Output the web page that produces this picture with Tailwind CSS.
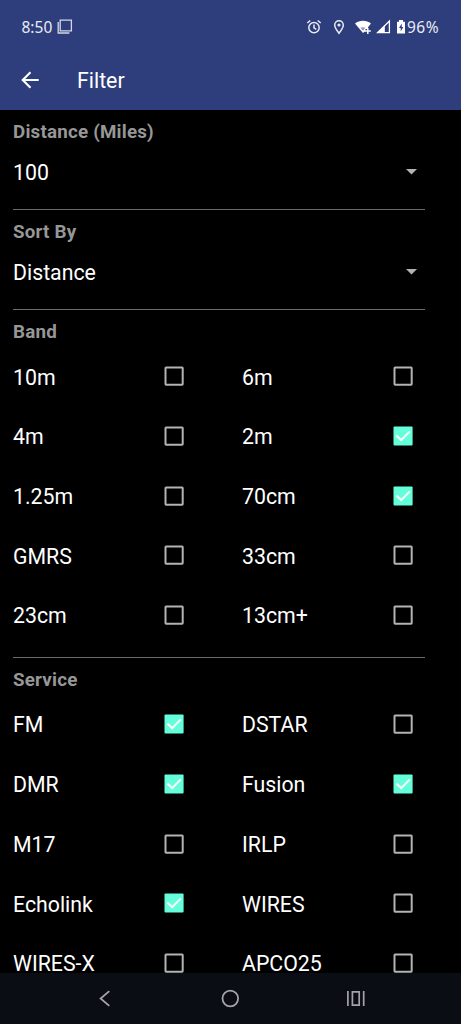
<!DOCTYPE html>
<html lang="en">
<head>
<meta charset="utf-8">
<title>Filter</title>
<script src="https://cdn.jsdelivr.net/npm/@tailwindcss/browser@4"></script>
</head>
<body class="bg-black">
<svg class="hidden">
  <symbol id="off" viewBox="0 0 20 20"><rect x="1.500" y="1.500" width="17.200" height="17.200" rx=".6" fill="none" stroke="#b3b3b3" stroke-width="2"/></symbol>
  <symbol id="on" viewBox="0 0 20 20"><rect x=".5" y=".5" width="19.100" height="19.100" rx="1" fill="#64ffda"/><path d="M3.300 9.500l4.900 4.600 8.600-8.700" fill="none" stroke="#fff" stroke-width="2"/></symbol>
</svg>
<div class="flex h-[1024px] w-[461px] flex-col overflow-hidden bg-black font-['Roboto',sans-serif] text-[21.3px] text-white">
  <header class="flex h-[109.5px] shrink-0 flex-col bg-[#2e3d7c]">
    <div class="flex h-[53px] items-center pt-[2px] pr-[20.5px] pl-[21.5px] font-['Noto_Sans',sans-serif] text-[#e9ebf2]">
      <span class="w-[35.5px] pt-px whitespace-nowrap text-[15.5px]">8:50</span>
      <svg class="mb-px h-4 w-4" viewBox="0 0 16 16" fill="none" stroke="#d5d8e5" stroke-width="1.300"><path d="M3.200 1.100h11.200v10.800H3.200zM1.200 3v11H12.400"/></svg>
      <span class="flex-1"></span>
      <svg class="mb-px h-4 w-4" viewBox="0 0 16 16" fill="none" stroke="#e9ebf2" stroke-width="1.500"><circle cx="8" cy="8.600" r="5.200"/><path d="M8 5.500v3.400l2.300 1.400M1.300 4l3-2.500M14.700 4l-3-2.500"/></svg>
      <svg class="mb-px ml-[9px] h-4 w-4" viewBox="0 0 16 16" fill="none" stroke="#e9ebf2" stroke-width="1.500"><path d="M8 14.300C5.500 11 3.700 8.300 3.700 6a4.300 4.300 0 018.600 0C12.300 8.300 10.500 11 8 14.300z"/><circle cx="8" cy="6" r="1.600" fill="#e9ebf2" stroke="none"/></svg>
      <svg class="mb-px ml-[8px] h-4 w-4" viewBox="0 0 16 16"><path d="M0 4.500C4.500.7 11.500.7 16 4.500L13 8.200V10h-2.500v2L8 14z" fill="#fff"/><path d="M5.400 8.500h5L8 11.800z" fill="#8d93ad"/><path d="M12.800 9v6M9.800 12h6" stroke="#fff" stroke-width="1.500"/></svg>
      <svg class="mb-px ml-[4.500px] h-4 w-4" viewBox="0 0 16 16"><path d="M1.500 13.700L13.400 2v11.700z" fill="none" stroke="#fff" stroke-width="1.300"/><path d="M1 14L8.800 6.300V14z" fill="#fff"/></svg>
      <svg class="mb-px ml-[4px] h-4 w-[10px]" viewBox="0 0 10 16"><path d="M1 2.800h2V1h4v1.800h2V14.500H1z" fill="#fff"/><path d="M5.700 4.500L3 9h1.700v3.500L7.300 8H5.700z" fill="#2e3d7c"/></svg>
      <span class="w-[35px] pt-px pl-[1.5px] whitespace-nowrap text-[15.5px] tracking-[0.5px]">96%</span>
    </div>
    <div class="flex h-[55px] items-center pl-[20px]">
      <svg class="mb-px h-5 w-5" viewBox="0 0 20 20" fill="none" stroke="#fff" stroke-width="2.100"><path d="M18.700 10H3M10.500 2.200L2.700 10l7.800 7.800"/></svg>
      <h1 class="ml-[37px] text-[21.3px] font-normal">Filter</h1>
    </div>
  </header>

  <main id="main" class="min-h-0 flex-1 overflow-hidden pr-[36px] pl-[13px]"></main>

  <nav class="flex h-[51px] shrink-0 items-center justify-between bg-[#0b0d15] pr-[95px] pl-[94px]">
    <svg class="h-5 w-5" viewBox="0 0 20 20" fill="none" stroke="#a3a4a7" stroke-width="1.800"><path d="M15.300 2.100L6.600 9.500l8.700 7.400"/></svg>
    <svg class="h-5 w-5" viewBox="0 0 20 20" fill="none" stroke="#a3a4a7" stroke-width="1.800"><circle cx="10.300" cy="9.500" r="7.800"/></svg>
    <svg class="h-5 w-5" viewBox="0 0 20 20" fill="none" stroke="#a3a4a7" stroke-width="1.700"><path d="M1.900 2v15M17.700 2v15"/><path d="M6.400 2.900h6.800v13.200h-6.800z"/></svg>
  </nav>
</div>
<script>
  const heading = t => `<h2 class="flex h-[37px] items-center pt-[8px] text-[18.8px] leading-none font-bold tracking-[0.2px] text-[#979797]">${t}</h2>`;
  const select = (label, value) => `<section class="h-[100.2px] border-b border-[#6b6b6b]">${heading(label)}
    <div class="flex h-[51px] items-center justify-between"><span class="pt-[2px]">${value}</span>
    <svg class="mr-[8px] h-[6px] w-[11px]" viewBox="0 0 11 6"><path d="M0 0h11L5.500 5.600z" fill="#b3b3b3"/></svg></div></section>`;
  const group = (label, items) => `<section class="border-b border-[#6b6b6b] pb-[11.5px]">${heading(label)}
    <div class="grid grid-cols-[229px_183px]">${items.map(s => {
      const on = s.startsWith('*');
      return `<label class="flex h-[59.7px] items-center"><span class="w-[151.4px] pt-[1.5px]">${s.replace('*', '')}</span><svg class="mb-[1px] h-[20px] w-[20px]"><use href="#${on ? 'on' : 'off'}"/></svg></label>`;
    }).join('')}</div></section>`;
  document.getElementById('main').innerHTML =
    select('Distance (Miles)', '100') + select('Sort By', 'Distance') +
    group('Band', ['10m', '6m', '4m', '*2m', '1.25m', '*70cm', 'GMRS', '33cm', '23cm', '13cm+']) +
    group('Service', ['*FM', 'DSTAR', '*DMR', '*Fusion', 'M17', 'IRLP', '*Echolink', 'WIRES', 'WIRES-X', 'APCO25']);
</script>
</body>
</html>
